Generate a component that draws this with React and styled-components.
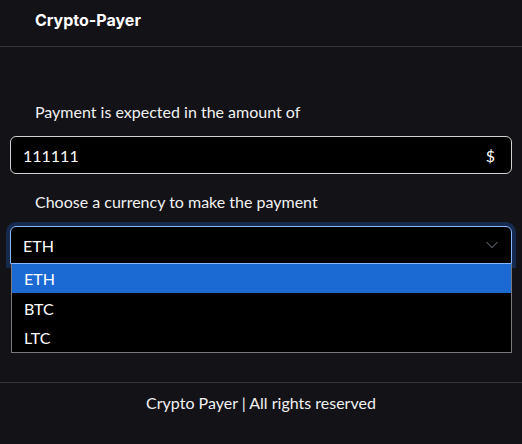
import styled, { createGlobalStyle } from "styled-components"

const Global = createGlobalStyle`
    body {
        margin: 0;
        background: #121217;
        color: #f1f1f1;
        font-family: "Lato", "Open Sans", sans-serif;
    }
`;

const currencies = ["ETH", "BTC", "LTC"];

const App = () => {
    return (
        <Page>
            <Global />
            <Header>
                <Title>Crypto-Payer</Title>
            </Header>
            <Main>
                <Label>Payment is expected in the amount of</Label>
                <Field>
                    <Value>111111</Value>
                    <Value>$</Value>
                </Field>
                <Label $gap>Choose a currency to make the payment</Label>
                <SelectBox>
                    <Value>ETH</Value>
                    <svg width="14" height="14" viewBox="0 0 16 16" fill="none">
                        <path d="M2 5l6 6 6-6" stroke="#4a4f57" strokeWidth="1.6" strokeLinecap="round" strokeLinejoin="round" />
                    </svg>
                </SelectBox>
                <Options>
                    {currencies.map((c, i) => (
                        <Option key={c} $active={i === 0}>{c}</Option>
                    ))}
                </Options>
            </Main>
            <Footer>Crypto Payer | All rights reserved</Footer>
        </Page>
    )
};

const Page = styled.div`
    display: flex;
    flex-direction: column;
    min-height: 444px;
`;

const Header = styled.header`
    height: 47px;
    display: flex;
    align-items: center;
    padding-left: 35px;
    border-bottom: 1px solid #35353a;
    box-sizing: border-box;
    padding-bottom: 6px;
`;

const Title = styled.h1`
    margin: 0;
    font-family: "Inter", sans-serif;
    font-weight: 700;
    font-size: 16px;
    color: #fff;
`;

const Main = styled.main`
    display: flex;
    flex-direction: column;
    padding: 53px 10px 29px;
`;

const Label = styled.p`
    margin: ${p => p.$gap ? "16px" : "0"} 0 12px 25px;
    font-size: 16px;
    line-height: 24px;
`;

const Field = styled.div`
    height: 38px;
    box-sizing: border-box;
    border: 1px solid #d0d0d0;
    border-radius: 6px;
    background: #000;
    display: flex;
    align-items: center;
    justify-content: space-between;
    padding: 0 16px 0 12px;
`;

const Value = styled.span`
    font-size: 16px;
    color: #fff;
`;

const SelectBox = styled.div`
    height: 38px;
    box-sizing: border-box;
    border: 1px solid #86b7fe;
    border-radius: 6px 6px 0 0;
    box-shadow: 0 0 0 4px #152a4c;
    background: #000;
    display: flex;
    align-items: center;
    justify-content: space-between;
    padding: 0 12px 0 12px;
`;

const Options = styled.div`
    margin: 0 0 0 1px;
    border: 1px solid #7a7a7a;
    border-top: none;
    background: #000;
    position: relative;
`;

const Option = styled.div`
    height: 29.4px;
    display: flex;
    align-items: center;
    padding-left: 12px;
    font-size: 16px;
    color: #fff;
    background: ${p => p.$active ? "#1b69d3" : "#000"};
`;

const Footer = styled.footer`
    border-top: 1px solid #35353a;
    text-align: center;
    font-size: 16px;
    padding-top: 10px;
    height: 62px;
    box-sizing: border-box;
`;

export default App
